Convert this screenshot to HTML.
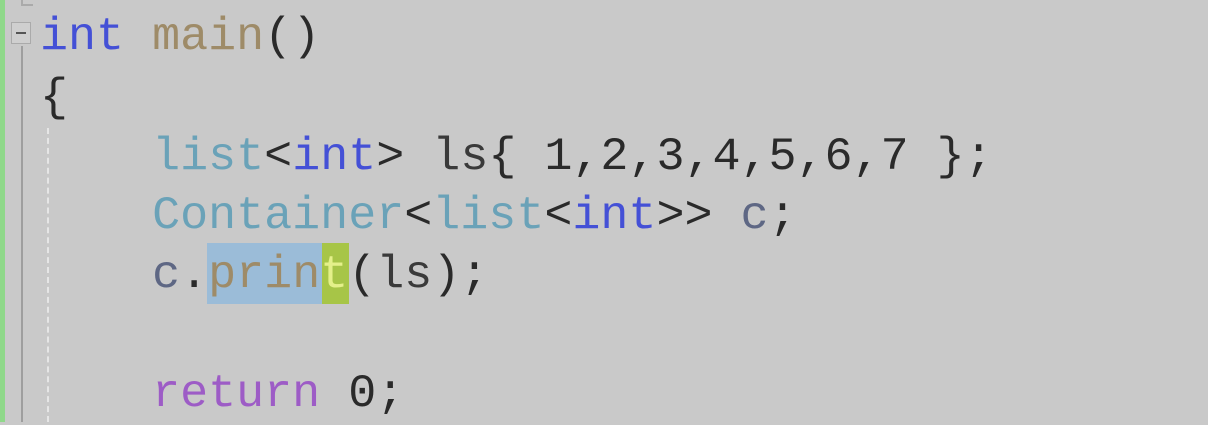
<!DOCTYPE html>
<html><head><style>
html,body{margin:0;padding:0;}
body{width:1208px;height:422px;background:#c9c9c9;position:relative;overflow:hidden;font-family:"Liberation Mono",monospace;}
.bar{position:absolute;left:0;top:0;width:5px;height:422px;background:#8fd88a;}
.fold{position:absolute;left:11px;top:22px;width:20px;height:22px;border:1px solid #aaa;box-sizing:border-box;background:#cfcfcf;}
.fold:after{content:"";position:absolute;left:4px;top:9px;width:10px;height:2px;background:#555;}
.vline{position:absolute;left:21px;top:46px;width:2px;height:376px;background:#9e9e9e;}
.tick{position:absolute;left:21px;top:0;width:12px;height:6px;border-left:2px solid #aaa;border-bottom:2px solid #aaa;box-sizing:border-box;}
.guide{position:absolute;left:47px;top:128px;width:0;height:294px;border-left:2px dashed #e6e6e6;}
.line{position:absolute;left:40px;font-size:46.7px;line-height:60px;white-space:pre;color:#2a2a2a;}
.kw{color:#4450d6}.fn{color:#9e8b68}.ty{color:#6aa2b8}.v{color:#5e6784}.p{color:#9d5cc6}.d{color:#3a3a3a}
.sel{position:absolute;left:207px;top:243px;width:115px;height:61px;background:#9bbcd8;}
.sel2{position:absolute;left:322px;top:243px;width:27px;height:61px;background:#a7c547;}
</style></head><body>
<div class="bar"></div>
<div class="tick"></div>
<div class="fold"></div>
<div class="vline"></div>
<div class="guide"></div>
<div class="sel"></div><div class="sel2"></div>
<div class="line" style="top:8px"><span class="kw">int</span> <span class="fn">main</span>()</div>
<div class="line" style="top:69px">{</div>
<div class="line" style="top:128px">    <span class="ty">list</span>&lt;<span class="kw">int</span>&gt; <span class="d">ls</span>{ 1,2,3,4,5,6,7 };</div>
<div class="line" style="top:187px">    <span class="ty">Container</span>&lt;<span class="ty">list</span>&lt;<span class="kw">int</span>&gt;&gt; <span class="v">c</span>;</div>
<div class="line" style="top:246px">    <span class="v">c</span>.<span class="fn">prin</span><span style="color:#e4f08a">t</span>(<span class="d">ls</span>);</div>
<div class="line" style="top:365px">    <span class="p">return</span> 0;</div>
</body></html>
